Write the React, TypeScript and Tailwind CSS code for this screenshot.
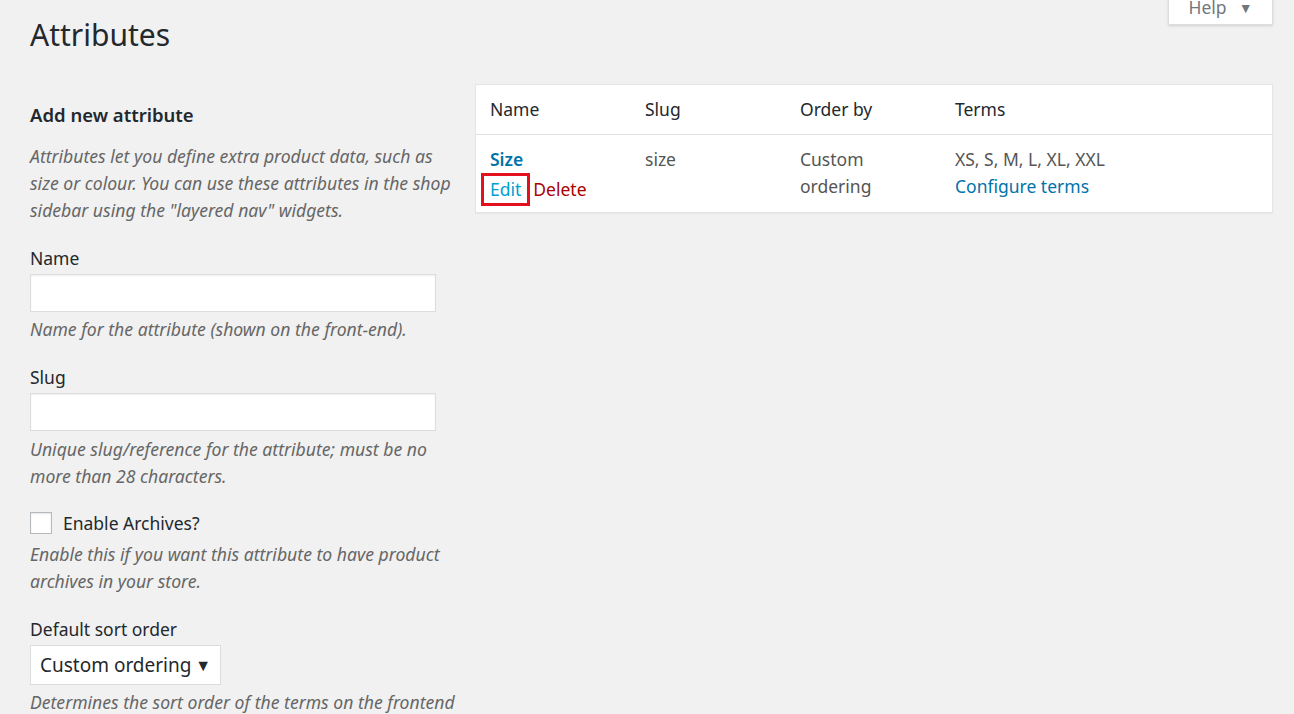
import React from 'react';

const font = { fontFamily: '"Noto Sans", "Open Sans", Arial, sans-serif' };

const Desc: React.FC<{ children: React.ReactNode; className?: string }> = ({ children, className }) => (
  <p className={`italic text-[#666] text-[17.6px] leading-[27px] ${className || ''}`}>{children}</p>
);

const App: React.FC = () => {
  return (
    <div className="w-[1294px] h-[714px] overflow-hidden bg-[#f1f1f1] text-[#23282d] relative" style={font}>
      {/* Help tab */}
      <div className="absolute right-[21px] top-[-10px] h-[35px] w-[105px] bg-white border border-[#ddd] border-t-0 shadow-sm flex items-center justify-center gap-3 text-[17.5px] text-[#72777c]">
        <span>Help</span>
        <span className="text-[14px]">▼</span>
      </div>

      <div className="pl-[30px] pr-[21px]">
        <h1 className="text-[30px] leading-[40px] font-normal pt-[15px]">Attributes</h1>

        <div className="flex mt-[29px]">
          {/* Left column */}
          <div className="w-[432px] shrink-0 pt-[18px]">
            <h2 className="text-[18.5px] font-semibold leading-[26px]">Add new attribute</h2>
            <Desc className="mt-[15px]">
              Attributes let you define extra product data, such as size or colour. You can use these attributes in the shop sidebar using the "layered nav" widgets.
            </Desc>

            <div className="mt-[23px] text-[17.5px] leading-[22px]">Name</div>
            <div className="mt-[5px] h-[38px] w-[406px] bg-white border border-[#ddd] shadow-[inset_0_1px_2px_rgba(0,0,0,0.07)]" />
            <Desc className="mt-[4px]">Name for the attribute (shown on the front-end).</Desc>

            <div className="mt-[23px] text-[17.5px] leading-[22px]">Slug</div>
            <div className="mt-[5px] h-[38px] w-[406px] bg-white border border-[#ddd] shadow-[inset_0_1px_2px_rgba(0,0,0,0.07)]" />
            <Desc className="mt-[5px]">Unique slug/reference for the attribute; must be no more than 28 characters.</Desc>

            <div className="mt-[22px] flex items-center gap-[11px] text-[17.5px] leading-[22px]">
              <div className="w-[22px] h-[22px] bg-white border border-[#b4b9be] shadow-[inset_0_1px_2px_rgba(0,0,0,0.1)]" />
              <span>Enable Archives?</span>
            </div>
            <Desc className="mt-[7px]">Enable this if you want this attribute to have product archives in your store.</Desc>

            <div className="mt-[23px] text-[17.5px] leading-[22px]">Default sort order</div>
            <div className="mt-[5px] h-[40px] w-[191px] bg-white border border-[#ddd] flex items-center pl-[9px] pr-[9px] justify-between text-[19px]">
              <span>Custom ordering</span>
              <span className="text-[16px] text-[#23282d]">▼</span>
            </div>
            <Desc className="mt-[4px] whitespace-nowrap">Determines the sort order of the terms on the frontend</Desc>
          </div>

          {/* Right column */}
          <div className="ml-[13px] flex-1">
            <div className="bg-white border border-[#e5e5e5] shadow-[0_1px_1px_rgba(0,0,0,0.04)] text-[17.5px]">
              <div className="flex h-[50px] items-center border-b border-[#e1e1e1] px-[14px]">
                <div className="w-[155px]">Name</div>
                <div className="w-[155px]">Slug</div>
                <div className="w-[155px]">Order by</div>
                <div className="flex-1">Terms</div>
              </div>
              <div className="flex px-[14px] pt-[11px] pb-[6px] leading-[27px]">
                <div className="w-[155px]">
                  <div className="font-semibold text-[#0073aa]">Size</div>
                  <div className="flex items-center -ml-[9px]">
                    <span className="border-[3px] border-[#e3111d] px-[6px] leading-[27px] text-[#00a0d2]">Edit</span>
                    <span className="ml-[3px] text-[#a00]">Delete</span>
                  </div>
                </div>
                <div className="w-[155px] text-[#555]">size</div>
                <div className="w-[155px] text-[#555]">
                  <div>Custom</div>
                  <div>ordering</div>
                </div>
                <div className="flex-1 text-[#555]">
                  <div>XS, S, M, L, XL, XXL</div>
                  <div className="text-[#0073aa]">Configure terms</div>
                </div>
              </div>
            </div>
          </div>
        </div>
      </div>
    </div>
  );
};

export default App;
